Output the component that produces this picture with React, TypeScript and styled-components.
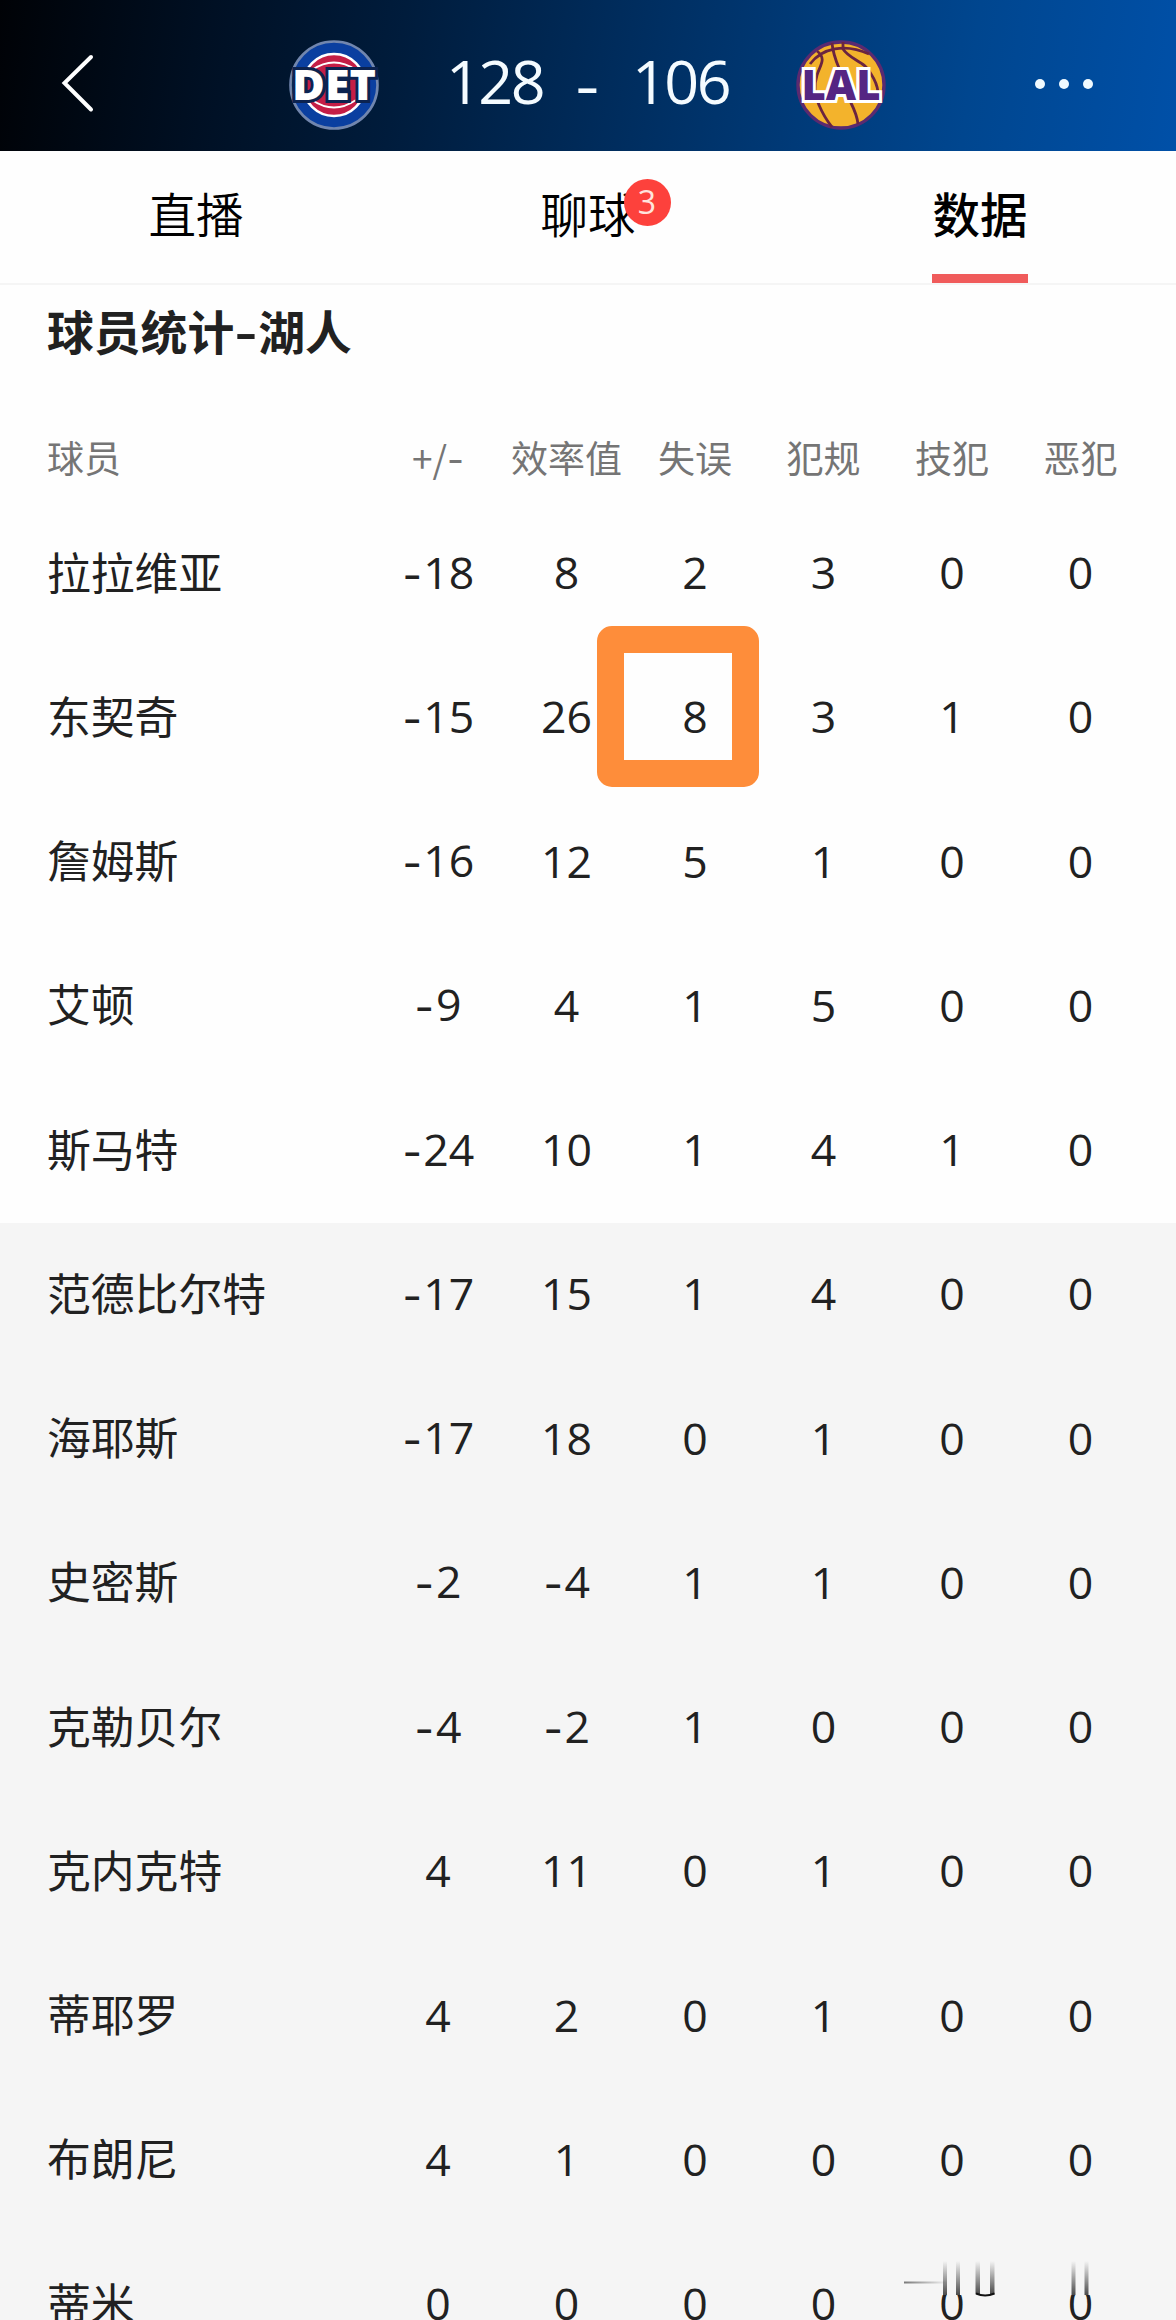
import React from "react";
import styled, { createGlobalStyle } from "styled-components";

const CJK = `"Noto Sans CJK SC", sans-serif`;

const GlobalStyle = createGlobalStyle`
  body {
    margin: 0;
    background: #fff;
    font-family: "Open Sans", ${CJK};
  }
`;

const Page = styled.div`
  position: relative;
  width: 1176px;
  height: 2320px;
  overflow: hidden;
  background: #fefefe;
  color: #212121;
`;

const Header = styled.header`
  display: grid;
  grid-template-columns: 288px 92px 1fr 92px 289px;
  align-items: center;
  height: 151px;
  padding-top: 18px;
  box-sizing: border-box;
  background: linear-gradient(
    98deg,
    #000206 0%,
    #001024 18%,
    #001c3c 34%,
    #002c5c 52%,
    #003a78 68%,
    #00468f 82%,
    #0050a8 100%
  );
`;

const BackButton = styled.div`
  padding-left: 60px;
  height: 64px;
`;

const MoreButton = styled.div`
  display: flex;
  gap: 14px;
  padding: 0 0 2px 148px;
`;

const Dot = styled.span`
  width: 10px;
  height: 10px;
  border-radius: 50%;
  background: #f0faff;
`;

const Score = styled.div`
  display: flex;
  justify-content: center;
  align-items: center;
  padding-bottom: 8px;
  color: #f4fbff;
  font-size: 61px;
  line-height: 80px;
  font-weight: 400;
`;

const Points = styled.span`
  width: 104px;
  text-align: center;
  letter-spacing: -2.6px;
`;

const Dash = styled.span`
  width: 82px;
  padding-top: 14px;
  text-align: center;
  font-family: Inter, sans-serif;
  font-size: 56px;
  line-height: 66px;
`;

const Tabs = styled.nav`
  display: grid;
  grid-template-columns: repeat(3, 1fr);
  height: 132px;
  border-bottom: 2px solid #f5f5f5;
`;

const Tab = styled.div<{ $active?: boolean }>`
  display: flex;
  flex-direction: column;
  justify-content: space-between;
  align-items: center;
  color: #000;
  font-family: ${CJK};
  font-size: 47.5px;
  font-weight: ${({ $active }) => ($active ? 500 : 350)};
  line-height: 124px;

  &::after {
    content: "";
    width: 96px;
    height: 9px;
    background: ${({ $active }) => ($active ? "#f05b5b" : "transparent")};
  }
`;

const TabLabel = styled.span`
  position: relative;
  height: 120px;
`;

const Badge = styled.span`
  position: absolute;
  left: 83px;
  top: 28px;
  width: 47px;
  height: 47px;
  border-radius: 50%;
  background: #fd413c;
  color: #ffe4dc;
  font-family: "Open Sans", sans-serif;
  font-size: 32px;
  font-weight: 400;
  line-height: 46px;
  text-align: center;
`;

const SectionTitle = styled.h2`
  margin: 0;
  padding-left: 47px;
  height: 135px;
  font-family: ${CJK};
  font-size: 46.8px;
  font-weight: 700;
  line-height: 90px;
`;

const TitleDash = styled.span`
  display: inline-block;
  width: 24px;
  text-align: center;
  transform: scaleX(1.35);
`;

const Row = styled.div<{ $bench?: boolean }>`
  display: grid;
  grid-template-columns: 326.7px repeat(6, 128.5px);
  align-items: center;
  height: 144.25px;
  padding-left: 47px;
  background: ${({ $bench }) => ($bench ? "#f5f5f5" : "transparent")};
`;

const HeadRow = styled(Row)`
  height: 81.5px;
  color: #757575;
  font-family: ${CJK};
  font-size: 37px;
`;

const HeadCell = styled.span<{ $name?: boolean }>`
  padding-bottom: 7px;
  text-align: ${({ $name }) => ($name ? "left" : "center")};
  white-space: nowrap;
`;

const Name = styled.span`
  padding-bottom: 6px;
  font-family: ${CJK};
  font-size: 43.8px;
`;

const Value = styled.span`
  position: relative;
  padding-bottom: 3px;
  text-align: center;
  font-size: 44.6px;
  line-height: 60px;
`;

const Minus = styled.span`
  display: inline-block;
  margin-right: 1px;
  font-family: Inter, sans-serif;
  transform: translateY(2px) scaleX(0.95);
`;

const HeadMinus = styled(Minus)`
  margin: 0;
  transform: none;
`;

const Marker = styled.span`
  position: absolute;
  left: -34px;
  top: -60px;
  width: 162px;
  height: 160.5px;
  box-sizing: border-box;
  border: 27px solid #fe8d3a;
  border-radius: 15px;
`;

const Smear = styled.svg`
  position: absolute;
  left: 904px;
  top: 2256px;
`;

const COLUMNS = ["+/-", "效率值", "失误", "犯规", "技犯", "恶犯"];

interface Player {
  name: string;
  stats: number[];
  bench?: boolean;
  marked?: number;
}

const PLAYERS: Player[] = [
  { name: "拉拉维亚", stats: [-18, 8, 2, 3, 0, 0] },
  { name: "东契奇", stats: [-15, 26, 8, 3, 1, 0], marked: 2 },
  { name: "詹姆斯", stats: [-16, 12, 5, 1, 0, 0] },
  { name: "艾顿", stats: [-9, 4, 1, 5, 0, 0] },
  { name: "斯马特", stats: [-24, 10, 1, 4, 1, 0] },
  { name: "范德比尔特", stats: [-17, 15, 1, 4, 0, 0], bench: true },
  { name: "海耶斯", stats: [-17, 18, 0, 1, 0, 0], bench: true },
  { name: "史密斯", stats: [-2, -4, 1, 1, 0, 0], bench: true },
  { name: "克勒贝尔", stats: [-4, -2, 1, 0, 0, 0], bench: true },
  { name: "克内克特", stats: [4, 11, 0, 1, 0, 0], bench: true },
  { name: "蒂耶罗", stats: [4, 2, 0, 1, 0, 0], bench: true },
  { name: "布朗尼", stats: [4, 1, 0, 0, 0, 0], bench: true },
  { name: "蒂米", stats: [0, 0, 0, 0, 0, 0], bench: true },
];

const PistonsLogo = () => (
  <svg width="92" height="92" viewBox="0 0 92 92">
    <circle cx="46" cy="46" r="43.5" fill="#0a3fa0" stroke="#7186ae" strokeWidth="2.6" />
    <circle cx="46" cy="46" r="31" fill="#c41e46" stroke="#fff" strokeWidth="2.6" />
    <path
      d="M24 31Q46 16 68 31M24 61Q46 76 68 61"
      fill="none"
      stroke="#fff"
      strokeWidth="1.8"
    />
    <text
      x="46"
      y="61"
      textAnchor="middle"
      textLength="84"
      lengthAdjust="spacingAndGlyphs"
      fontFamily="Open Sans"
      fontWeight="800"
      fontSize="42"
      fill="#fff"
      stroke="#0c2350"
      strokeWidth="6"
      strokeLinejoin="miter"
      paintOrder="stroke"
    >
      DET
    </text>
  </svg>
);

const LakersLogo = () => (
  <svg width="92" height="92" viewBox="0 0 92 92">
    <circle cx="46" cy="46" r="43" fill="#f3b32c" stroke="#5a2a70" strokeWidth="3.4" />
    <g fill="none" stroke="#6a2440" strokeWidth="2.8">
      <path d="M15 25C27 9 50 4 74 15" />
      <path d="M22 12C32 20 25 26 22 36Q17 52 24 66Q29 78 37 88" />
      <path d="M37 4Q38 15 44 29L56 64Q62 76 63 85" />
      <path d="M48 3V10C55 21 70 22 76 35Q82 44 83 53" />
    </g>
    <text
      x="46"
      y="61"
      textAnchor="middle"
      textLength="79"
      lengthAdjust="spacingAndGlyphs"
      fontFamily="Open Sans"
      fontWeight="800"
      fontSize="42"
      fill="#552583"
      stroke="#fff"
      strokeWidth="6"
      strokeLinejoin="miter"
      paintOrder="stroke"
    >
      LAL
    </text>
  </svg>
);

const BottomSmear = () => (
  <Smear width="250" height="42" viewBox="0 0 250 42">
    <defs>
      <linearGradient id="fade" x1="0" y1="0" x2="0" y2="1">
        <stop offset="0" stopColor="#212121" stopOpacity="0" />
        <stop offset="1" stopColor="#212121" stopOpacity="0.8" />
      </linearGradient>
      <linearGradient id="line" x1="0" y1="0" x2="1" y2="0">
        <stop offset="0" stopColor="#444" stopOpacity="0.7" />
        <stop offset="1" stopColor="#444" stopOpacity="0" />
      </linearGradient>
    </defs>
    <rect width="250" height="39" fill="#f5f5f5" />
    <rect y="25.500" width="44" height="2" fill="url(#line)" />
    {[39, 52, 167.5, 180.5].map((x) => (
      <rect key={x} x={x} y="5" width="4" height="34" fill="url(#fade)" />
    ))}
    <rect x="71.500" y="5" width="4.500" height="33" fill="url(#fade)" />
    <rect x="86" y="5" width="4.500" height="33" fill="url(#fade)" />
    <path d="M72 37.500Q81 41.500 90.500 37.500" fill="none" stroke="#111" strokeWidth="2" />
  </Smear>
);

const StatValue = ({ value, marked }: { value: number; marked: boolean }) => (
  <Value>
    {value < 0 && <Minus>-</Minus>}
    {Math.abs(value)}
    {marked && <Marker />}
  </Value>
);

function App() {
  return (
    <Page>
      <GlobalStyle />
      <Header>
        <BackButton>
          <svg width="36" height="60" viewBox="0 0 36 60">
            <path
              d="M31 4L4.500 30L31 56.500"
              fill="none"
              stroke="#fff"
              strokeWidth="4"
              strokeLinecap="round"
            />
          </svg>
        </BackButton>
        <PistonsLogo />
        <Score>
          <Points>128</Points>
          <Dash>-</Dash>
          <Points>106</Points>
        </Score>
        <LakersLogo />
        <MoreButton>
          <Dot />
          <Dot />
          <Dot />
        </MoreButton>
      </Header>
      <Tabs>
        <Tab>
          <TabLabel>直播</TabLabel>
        </Tab>
        <Tab>
          <TabLabel>
            聊球
            <Badge>3</Badge>
          </TabLabel>
        </Tab>
        <Tab $active>
          <TabLabel>数据</TabLabel>
        </Tab>
      </Tabs>
      <SectionTitle>
        球员统计<TitleDash>-</TitleDash>湖人
      </SectionTitle>
      <HeadRow>
        <HeadCell $name>球员</HeadCell>
        {COLUMNS.map((label) => (
          <HeadCell key={label}>
            {label.replace("-", "")}
            {label.endsWith("-") && <HeadMinus>-</HeadMinus>}
          </HeadCell>
        ))}
      </HeadRow>
      {PLAYERS.map(({ name, stats, bench, marked }) => (
        <Row key={name} $bench={bench}>
          <Name>{name}</Name>
          {stats.map((value, i) => (
            <StatValue key={i} value={value} marked={marked === i} />
          ))}
        </Row>
      ))}
      <BottomSmear />
    </Page>
  );
}

export default App;
